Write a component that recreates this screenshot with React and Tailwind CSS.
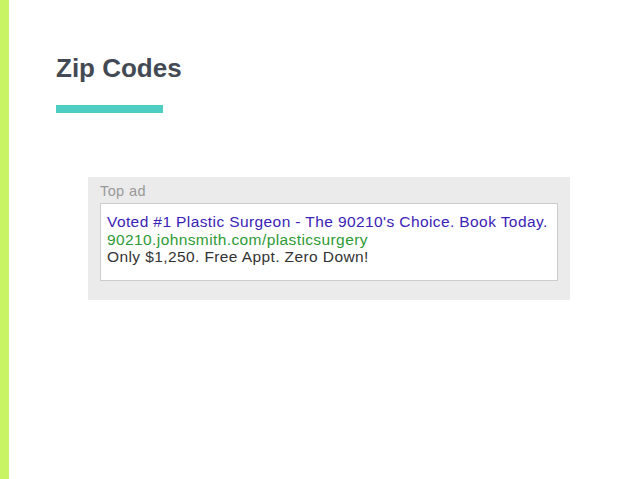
import React from "react";

function App() {
  return (
    <div
      className="flex w-[638px] h-[479px] bg-white"
      style={{ fontFamily: '"Liberation Sans", Arial, sans-serif' }}
    >
      <div className="w-[9px] h-full bg-[#c8f363]" />
      <div className="flex flex-col pl-[47px] pt-[53px]">
        <h1 className="text-[26px] leading-[30px] font-bold text-[#434a54]">
          Zip Codes
        </h1>
        <div className="mt-[22px] w-[107px] h-[8px] bg-[#4ecdc4]" />

        <div className="mt-[64px] ml-[32px] w-[482px] h-[123px] bg-[#ebebeb] px-[12px] pt-[6px]">
          <div className="text-[14.5px] leading-[16px] tracking-[0.4px] text-[#999999]">Top ad</div>
          <div className="mt-[4px] h-[78px] bg-white border border-[#cccccc] px-[6px] pt-[9px] text-[15.5px] leading-[17.5px] tracking-[0.4px]">
            <div className="text-[#3b22b6]">
              Voted #1 Plastic Surgeon - The 90210's Choice. Book Today.
            </div>
            <div className="text-[#2d9a35]">90210.johnsmith.com/plasticsurgery</div>
            <div className="text-[#333333]">Only $1,250. Free Appt. Zero Down!</div>
          </div>
        </div>
      </div>
    </div>
  );
}

export default App;
